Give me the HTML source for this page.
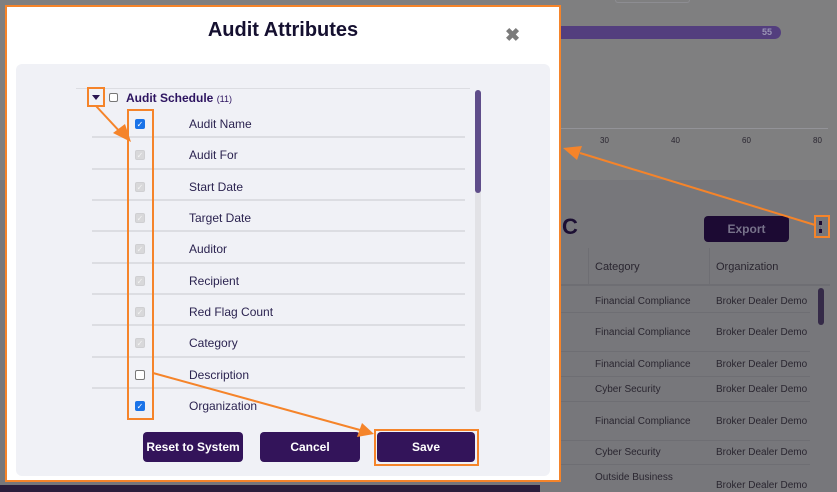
<!DOCTYPE html>
<html><head><meta charset="utf-8"><style>
*{margin:0;padding:0;box-sizing:border-box}
body{width:837px;height:492px;overflow:hidden;background:#7f7f80;font-family:"Liberation Sans",sans-serif;position:relative}
.a{position:absolute}
.t{font-size:10px;color:#2a2630}
.lbl{font-size:12px;color:#2b2350;left:189px}
.sep{left:92px;width:373px;height:2px;background:#dcdde2}
.cb{left:135px;width:10px;height:10px;border-radius:2px;font-size:8px;line-height:9px;text-align:center;font-weight:bold;font-family:"DejaVu Sans",sans-serif}
.on{background:#1a73e8;border:1px solid #1a73e8;color:#fff}
.dis{background:#d8d8da;border:1px solid #cfcfd2;color:#f4f4f4}
.off{background:#fff;border:1px solid #777}
.btn{top:432px;height:30px;background:#33145a;color:#fff;font-weight:bold;font-size:12px;border-radius:4px;text-align:center;line-height:30px}
</style></head><body>
<div class="a" style="left:0;top:180px;width:837px;height:312px;background:#77777b"></div>
<div class="a" style="left:615px;top:0;width:75px;height:3px;border:1px solid #8d8d92;border-top:0;border-radius:0 0 4px 4px"></div>
<div class="a" style="left:540px;top:26px;width:241px;height:13px;background:#533e7e;border-radius:7px"></div>
<div class="a" style="left:762px;top:27px;font-size:9px;color:#9a95b5;font-weight:bold">55</div>
<div class="a" style="left:560px;top:128px;width:268px;height:1px;background:#939398"></div>
<div class="a t" style="left:600px;top:136px;font-size:8px">30</div>
<div class="a t" style="left:671px;top:136px;font-size:8px">40</div>
<div class="a t" style="left:742px;top:136px;font-size:8px">60</div>
<div class="a t" style="left:813px;top:136px;font-size:8px">80</div>
<div class="a" style="left:562px;top:214px;font-size:22px;font-weight:bold;color:#1c0f33">C</div>
<div class="a" style="left:704px;top:216px;width:85px;height:26px;background:#1c0a33;border-radius:4px;color:#77728a;font-weight:bold;font-size:12px;text-align:center;line-height:26px">Export</div>
<div class="a" style="left:819px;top:221px;width:4px;height:12px;border-left:3px dotted #1c0a33"></div>
<div class="a" style="left:560px;top:248px;width:270px;height:38px;border-bottom:2px solid #6e6e73"></div>
<div class="a" style="left:588px;top:248px;width:1px;height:38px;background:#6e6e73"></div>
<div class="a" style="left:709px;top:248px;width:1px;height:38px;background:#6e6e73"></div>
<div class="a t" style="left:595px;top:261px;font-size:11px">Category</div>
<div class="a t" style="left:716px;top:261px;font-size:11px">Organization</div>
<div class="a" style="left:818px;top:288px;width:6px;height:37px;background:#352a48;border-radius:3px"></div>
<div class="a t" style="left:595px;top:296px">Financial Compliance</div><div class="a t" style="left:716px;top:296px">Broker Dealer Demo</div>
<div class="a t" style="left:595px;top:327px">Financial Compliance</div><div class="a t" style="left:716px;top:327px">Broker Dealer Demo</div>
<div class="a t" style="left:595px;top:359px">Financial Compliance</div><div class="a t" style="left:716px;top:359px">Broker Dealer Demo</div>
<div class="a t" style="left:595px;top:384px">Cyber Security</div><div class="a t" style="left:716px;top:384px">Broker Dealer Demo</div>
<div class="a t" style="left:595px;top:416px">Financial Compliance</div><div class="a t" style="left:716px;top:416px">Broker Dealer Demo</div>
<div class="a t" style="left:595px;top:447px">Cyber Security</div><div class="a t" style="left:716px;top:447px">Broker Dealer Demo</div>
<div class="a t" style="left:595px;top:472px">Outside Business</div><div class="a t" style="left:716px;top:480px">Broker Dealer Demo</div>
<div class="a" style="left:560px;top:312px;width:250px;height:1px;background:#6e6e73"></div>
<div class="a" style="left:560px;top:351px;width:250px;height:1px;background:#6e6e73"></div>
<div class="a" style="left:560px;top:376px;width:250px;height:1px;background:#6e6e73"></div>
<div class="a" style="left:560px;top:401px;width:250px;height:1px;background:#6e6e73"></div>
<div class="a" style="left:560px;top:440px;width:250px;height:1px;background:#6e6e73"></div>
<div class="a" style="left:560px;top:464px;width:250px;height:1px;background:#6e6e73"></div>
<div class="a" style="left:0;top:485px;width:540px;height:7px;background:#2a1e3c"></div>

<div class="a" style="left:5px;top:5px;width:556px;height:477px;background:#fff;border:2px solid #f5842a"></div>
<div class="a" style="left:16px;top:64px;width:534px;height:412px;background:#f0f1f6;border-radius:6px"></div>
<div class="a" style="left:0;top:19px;width:566px;text-align:center;font-size:20px;font-weight:bold;color:#151030">Audit Attributes</div>
<div class="a" style="left:505px;top:25px;font-size:18px;font-weight:bold;color:#7b7b7b">✖</div>
<div class="a" style="left:76px;top:88px;width:394px;height:1px;background:#dcdde2"></div>
<div class="a" style="left:92px;top:95px;width:0;height:0;border-left:4px solid transparent;border-right:4px solid transparent;border-top:5px solid #2a1450"></div>
<div class="a cb off" style="left:109px;top:93px;width:9px;height:9px"></div>
<div class="a" style="left:126px;top:91px;font-size:12px;font-weight:bold;color:#2d1460">Audit Schedule <span style="font-size:9px;font-weight:normal">(11)</span></div>
<div class="a" style="left:475px;top:90px;width:6px;height:322px;background:#e2e2e6;border-radius:3px"></div>
<div class="a" style="left:475px;top:90px;width:6px;height:103px;background:#5f4d8a;border-radius:3px"></div>

<div class="a cb on" style="top:119px">✓</div><div class="a lbl" style="top:117px">Audit Name</div>
<div class="a sep" style="top:136px"></div>
<div class="a cb dis" style="top:150px">✓</div><div class="a lbl" style="top:148px">Audit For</div>
<div class="a sep" style="top:168px"></div>
<div class="a cb dis" style="top:182px">✓</div><div class="a lbl" style="top:180px">Start Date</div>
<div class="a sep" style="top:199px"></div>
<div class="a cb dis" style="top:213px">✓</div><div class="a lbl" style="top:211px">Target Date</div>
<div class="a sep" style="top:230px"></div>
<div class="a cb dis" style="top:244px">✓</div><div class="a lbl" style="top:242px">Auditor</div>
<div class="a sep" style="top:262px"></div>
<div class="a cb dis" style="top:276px">✓</div><div class="a lbl" style="top:274px">Recipient</div>
<div class="a sep" style="top:293px"></div>
<div class="a cb dis" style="top:307px">✓</div><div class="a lbl" style="top:305px">Red Flag Count</div>
<div class="a sep" style="top:324px"></div>
<div class="a cb dis" style="top:338px">✓</div><div class="a lbl" style="top:336px">Category</div>
<div class="a sep" style="top:356px"></div>
<div class="a cb off" style="top:370px"></div><div class="a lbl" style="top:368px">Description</div>
<div class="a sep" style="top:387px"></div>
<div class="a cb on" style="top:401px">✓</div><div class="a lbl" style="top:399px">Organization</div>

<div class="a btn" style="left:143px;width:100px">Reset to System</div>
<div class="a btn" style="left:260px;width:100px">Cancel</div>
<div class="a btn" style="left:377px;width:98px">Save</div>

<svg class="a" style="left:0;top:0" width="837" height="492">
<g fill="none" stroke="#f5842a" stroke-width="2">
<rect x="88" y="88" width="16" height="18"/>
<rect x="128" y="110" width="25" height="309"/>
<rect x="815" y="216" width="14" height="21"/>
<rect x="375" y="430" width="103" height="35"/>
<line x1="96" y1="106" x2="122" y2="134"/>
<line x1="815" y1="225" x2="580" y2="153"/>
<line x1="153" y1="373" x2="360" y2="430"/>
</g>
<g fill="#f5842a">
<polygon points="131,142 113,133 125,124"/>
<polygon points="563,148 582,146 577,160"/>
<polygon points="374,434 357,437 362,423"/>
</g>
</svg>
</body></html>
